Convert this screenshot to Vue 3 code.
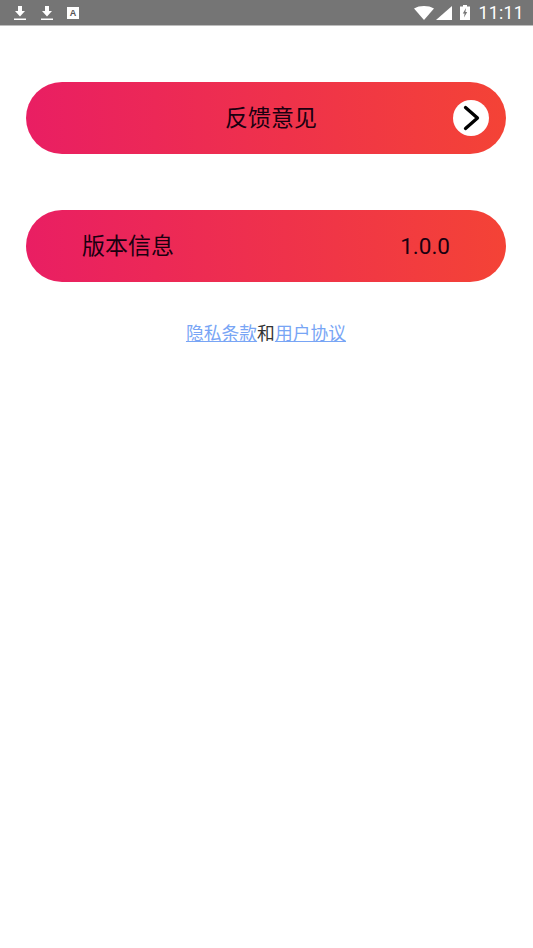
<script setup>
</script>

<template>
  <div class="page">
    <div class="status-bar">
      <div class="status-left">
        <svg class="ic-dl" viewBox="0 0 14 16" fill="#fff">
          <path d="M5 1h4v5h3L7 11.500 2 6h3z" />
          <rect x="1" y="13.500" width="12" height="1.500" />
        </svg>
        <svg class="ic-dl" viewBox="0 0 14 16" fill="#fff">
          <path d="M5 1h4v5h3L7 11.500 2 6h3z" />
          <rect x="1" y="13.500" width="12" height="1.500" />
        </svg>
        <span class="ic-a">A</span>
      </div>
      <div class="status-right">
        <svg class="ic-wifi" viewBox="0 0 20 14" fill="#fff">
          <path d="M0 2.500C5.500 -.8 14.500 -.8 20 2.500L10 14z" />
        </svg>
        <svg class="ic-signal" viewBox="0 0 16 14" fill="#fff">
          <path d="M16 0v14H0z" />
        </svg>
        <svg class="ic-battery" viewBox="0 0 10 15">
          <path fill="#fff" d="M3 0h4v1.500h3V15H0V1.500h3z" />
          <path fill="#757575" d="M6 3 2.800 8.500h1.800L4 12.500l3.200-5.500H5.400z" />
        </svg>
        <span class="time">11:11</span>
      </div>
    </div>

    <div class="content">
      <div class="pill">
        <span class="pill-title">反馈意见</span>
        <span class="arrow-btn">
          <svg viewBox="0 0 36 36" fill="none" stroke="#000" stroke-width="3.300" stroke-linecap="round" stroke-linejoin="round">
            <path d="M12.500 7.500 24.500 18 12.500 28.500" />
          </svg>
        </span>
      </div>

      <div class="pill pill-version">
        <span class="version-label">版本信息</span>
        <span class="version-num">1.0.0</span>
      </div>

      <p class="links">
        <a class="link">隐私条款</a>和<a class="link">用户协议</a>
      </p>
    </div>
  </div>
</template>

<style scoped>
.page {
  width: 533px;
  height: 948px;
  background: #fff;
  font-family: "Noto Sans CJK SC", "Liberation Sans", sans-serif;
  overflow: hidden;
}

.status-bar {
  height: 25px;
  background: #757575;
  border-bottom: 1px solid #bdbdbd;
  display: flex;
  align-items: center;
  justify-content: space-between;
  padding: 0 9px 0 13px;
}

.status-left,
.status-right {
  display: flex;
  align-items: center;
}

.ic-dl {
  width: 14px;
  height: 16px;
  margin-right: 13px;
}

.ic-a {
  width: 12px;
  height: 12px;
  background: #fff;
  color: #555;
  font-family: "Liberation Sans", sans-serif;
  font-size: 9px;
  font-weight: 700;
  line-height: 12px;
  text-align: center;
}

.ic-wifi {
  width: 20px;
  height: 14px;
  margin-right: 2px;
}

.ic-signal {
  width: 16px;
  height: 14px;
  margin-right: 8px;
}

.ic-battery {
  width: 10px;
  height: 15px;
  margin-right: 8px;
}

.time {
  color: #fff;
  font-family: Roboto, "Liberation Sans", sans-serif;
  font-size: 17.500px;
  line-height: 20px;
  letter-spacing: 0.4px;
}

.content {
  padding: 56px 27px 0 26px;
}

.pill {
  height: 72px;
  border-radius: 36px;
  background: linear-gradient(to right, #e91e63, #f44336);
  display: flex;
  align-items: center;
  color: #1a0010;
  font-size: 23px;
  position: relative;
}

.pill-title {
  flex: 1;
  text-align: center;
  padding: 0 0 4px 10px;
}

.arrow-btn {
  position: absolute;
  right: 17px;
  top: 18px;
  width: 36px;
  height: 36px;
  border-radius: 50%;
  background: #fff;
  display: block;
}

.arrow-btn svg {
  display: block;
  width: 36px;
  height: 36px;
}

.pill-version {
  margin-top: 56px;
  padding: 0 56px;
  justify-content: space-between;
}

.version-label {
  padding-bottom: 4px;
}

.version-num {
  font-family: Roboto, "Liberation Sans", sans-serif;
  font-size: 22.500px;
}

.links {
  margin: 37px 0 0;
  text-align: center;
  font-size: 17.800px;
  line-height: 26px;
  color: #333;
}

.link {
  color: #78a5f5;
  text-decoration: underline;
}
</style>
